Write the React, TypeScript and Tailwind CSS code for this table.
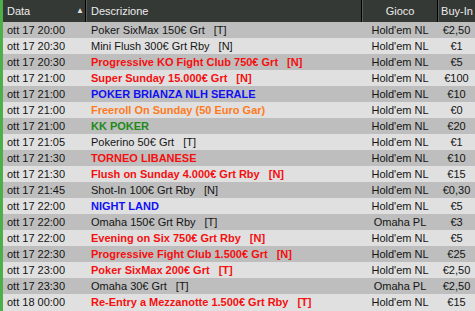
import React from 'react';

type Row = { date: string; name: string; tag?: string; color: string; game: string; buy: string };

const RED = 'text-[#f50f0f] font-bold';
const DARK = 'text-[#141414]';
const rows: Row[] = [
    { date: 'ott 17 20:00', name: 'Poker SixMax 150€ Grt', tag: '[T]', color: DARK, game: "Hold'em NL", buy: '€2,50' },
    { date: 'ott 17 20:30', name: 'Mini Flush 300€ Grt Rby', tag: '[N]', color: DARK, game: "Hold'em NL", buy: '€1' },
    { date: 'ott 17 20:30', name: 'Progressive KO Fight Club 750€ Grt', tag: '[N]', color: RED, game: "Hold'em NL", buy: '€5' },
    { date: 'ott 17 21:00', name: 'Super Sunday 15.000€ Grt', tag: '[N]', color: RED, game: "Hold'em NL", buy: '€100' },
    { date: 'ott 17 21:00', name: 'POKER BRIANZA NLH SERALE', color: 'text-[#1010f5] font-bold', game: "Hold'em NL", buy: '€10' },
    { date: 'ott 17 21:00', name: 'Freeroll On Sunday (50 Euro Gar)', color: 'text-[#ff7a1e] font-bold', game: "Hold'em NL", buy: '€0' },
    { date: 'ott 17 21:00', name: 'KK POKER', color: 'text-[#1f8a1a] font-bold', game: "Hold'em NL", buy: '€20' },
    { date: 'ott 17 21:05', name: 'Pokerino 50€ Grt', tag: '[T]', color: DARK, game: "Hold'em NL", buy: '€1' },
    { date: 'ott 17 21:30', name: 'TORNEO LIBANESE', color: RED, game: "Hold'em NL", buy: '€10' },
    { date: 'ott 17 21:30', name: 'Flush on Sunday 4.000€ Grt Rby', tag: '[N]', color: RED, game: "Hold'em NL", buy: '€15' },
    { date: 'ott 17 21:45', name: 'Shot-In 100€ Grt Rby', tag: '[N]', color: DARK, game: "Hold'em NL", buy: '€0,30' },
    { date: 'ott 17 22:00', name: 'NIGHT LAND', color: 'text-[#1010f5] font-bold', game: "Hold'em NL", buy: '€5' },
    { date: 'ott 17 22:00', name: 'Omaha 150€ Grt Rby', tag: '[T]', color: DARK, game: 'Omaha PL', buy: '€3' },
    { date: 'ott 17 22:00', name: 'Evening on Six 750€ Grt Rby', tag: '[N]', color: RED, game: "Hold'em NL", buy: '€5' },
    { date: 'ott 17 22:30', name: 'Progressive Fight Club 1.500€ Grt', tag: '[N]', color: RED, game: "Hold'em NL", buy: '€25' },
    { date: 'ott 17 23:00', name: 'Poker SixMax 200€ Grt', tag: '[T]', color: RED, game: "Hold'em NL", buy: '€2,50' },
    { date: 'ott 17 23:30', name: 'Omaha 30€ Grt', tag: '[T]', color: DARK, game: 'Omaha PL', buy: '€2,50' },
    { date: 'ott 18 00:00', name: 'Re-Entry a Mezzanotte 1.500€ Grt Rby', tag: '[T]', color: RED, game: "Hold'em NL", buy: '€15' },
];

export default function App() {
    return (
        <div className="w-[475px] h-[311px] overflow-hidden flex bg-[#e0e0e0] text-[11px] leading-none" style={{ fontFamily: '"Liberation Sans", Arial, sans-serif' }}>
            <div className="w-[3px] bg-[#4caf48] shrink-0" />
            <div className="flex-1 flex flex-col">
                <div className="h-[22px] flex bg-[#353935] text-[#ececec] whitespace-nowrap">
                    <div className="w-[83px] shrink-0 flex items-center justify-between pl-[4px] pr-[1px] border-r border-black">
                        <span>Data</span>
                        <span className="text-[8px] text-[#e0e0e0]">▲</span>
                    </div>
                    <div className="w-[276px] shrink-0 flex items-center pl-[4px] border-l border-[#555955] border-r border-r-black">Descrizione</div>
                    <div className="w-[76px] shrink-0 flex items-center justify-center border-l border-[#555955] border-r border-r-black">Gioco</div>
                    <div className="flex-1 flex items-center justify-center border-l border-[#555955]">Buy-In</div>
                </div>
                {rows.map((r, i) => (
                    <div key={i} className={`h-[16px] flex items-center whitespace-nowrap ${i % 2 === 0 ? 'bg-[#bebebe]' : 'bg-[#e0e0e0]'}`}>
                        <div className={`w-[83px] shrink-0 pl-[4px] ${DARK}`}>{r.date}</div>
                        <div className={`w-[276px] shrink-0 pl-[5px] overflow-hidden ${r.color}`}>
                            {r.name}
                            {r.tag && <span className="ml-[9px]">{r.tag}</span>}
                        </div>
                        <div className={`w-[76px] shrink-0 text-center ${DARK}`}>{r.game}</div>
                        <div className={`flex-1 text-center ${DARK}`}>{r.buy}</div>
                    </div>
                ))}
            </div>
        </div>
    );
}
